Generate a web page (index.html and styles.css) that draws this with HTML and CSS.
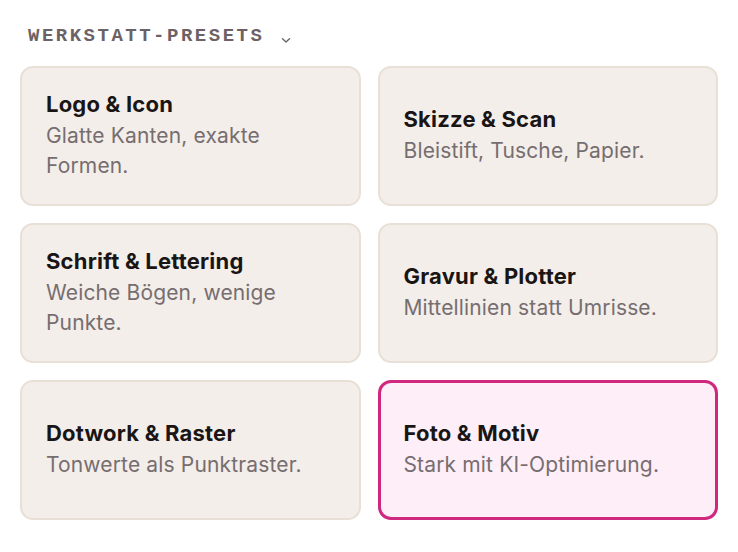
FILE: index.html
```html
<!DOCTYPE html>
<html lang="de">
<head>
<meta charset="utf-8">
<title>Werkstatt-Presets</title>
<link rel="stylesheet" href="styles.css">
</head>
<body>
<section class="panel">
  <header class="panel-head">
    <span class="panel-title">WERKSTATT-PRESETS</span>
    <svg class="chevron" width="10" height="7" viewBox="0 0 10 7" aria-hidden="true"><path d="M1.5 1.8 L5 5 L8.5 1.8" fill="none" stroke="currentColor" stroke-width="1.4" stroke-linecap="round" stroke-linejoin="round"/></svg>
  </header>
  <div class="grid">
    <div class="card">
      <div class="card-title">Logo &amp; Icon</div>
      <div class="card-desc">Glatte Kanten, exakte Formen.</div>
    </div>
    <div class="card">
      <div class="card-title">Skizze &amp; Scan</div>
      <div class="card-desc">Bleistift, Tusche, Papier.</div>
    </div>
    <div class="card">
      <div class="card-title">Schrift &amp; Lettering</div>
      <div class="card-desc">Weiche Bögen, wenige Punkte.</div>
    </div>
    <div class="card">
      <div class="card-title">Gravur &amp; Plotter</div>
      <div class="card-desc">Mittellinien statt Umrisse.</div>
    </div>
    <div class="card">
      <div class="card-title">Dotwork &amp; Raster</div>
      <div class="card-desc">Tonwerte als Punktraster.</div>
    </div>
    <div class="card card-selected">
      <div class="card-title">Foto &amp; Motiv</div>
      <div class="card-desc">Stark mit KI-Optimierung.</div>
    </div>
  </div>
</section>
</body>
</html>
```

FILE: styles.css
```css
* { box-sizing: border-box; }
html, body { margin: 0; padding: 0; background: #ffffff; }
body { font-family: Inter, "Noto Sans", "Liberation Sans", sans-serif; }

.panel {
  padding: 24px 20px;
}

.panel-head {
  display: flex;
  align-items: center;
  height: 24px;
  margin: 0 0 18px 8px;
  color: #6c6265;
}

.panel-title {
  font-family: "Liberation Mono", "DejaVu Sans Mono", monospace;
  font-weight: 700;
  font-size: 19px;
  line-height: 24px;
  letter-spacing: 2.5px;
}

.chevron {
  margin-left: 17px;
  margin-top: 8px;
  color: #6c6265;
}

.grid {
  display: grid;
  grid-template-columns: 1fr 1fr;
  grid-auto-rows: 140px;
  gap: 17px;
}

.card {
  display: flex;
  flex-direction: column;
  justify-content: center;
  gap: 4px;
  padding: 0 24px;
  background: #f3eee9;
  border: 2px solid #e8e0d7;
  border-radius: 13px;
}

.card-title {
  font-size: 22px;
  line-height: 26px;
  font-weight: 700;
  letter-spacing: 0.2px;
  color: #1a1515;
}

.card-desc {
  font-size: 21px;
  line-height: 30px;
  letter-spacing: 0.15px;
  color: #766d70;
  padding-right: 8px;
}

.card-selected {
  background: #fdeef7;
  border: 3px solid #d0287f;
  padding: 0 23px;
}
```
